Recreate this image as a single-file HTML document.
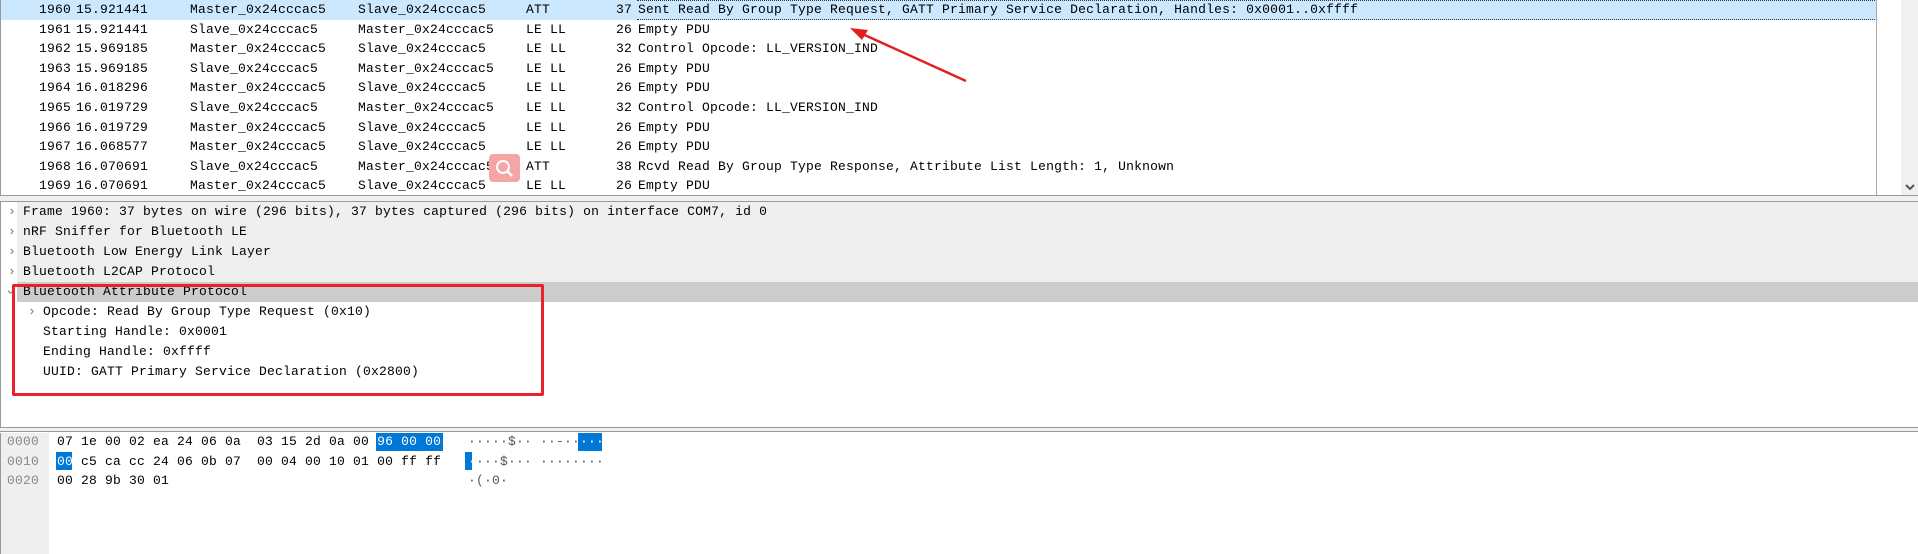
<!DOCTYPE html>
<html><head><meta charset="utf-8"><style>
*{margin:0;padding:0;box-sizing:border-box}
body{width:1918px;height:554px;background:#fff;position:relative;overflow:hidden;font-family:"Liberation Mono",monospace;font-size:13px;letter-spacing:0.2px;color:#000}
.a{position:absolute;white-space:pre}
.row{position:absolute;left:0;height:19.6px;line-height:19.6px;width:1876px}
.sel{background:#cce8ff;border:1px dotted #333;border-left:none}
.c{position:absolute;top:0;white-space:pre}
.r{text-align:right}
.d{position:absolute;left:0;height:20px;line-height:20px;width:1918px}
.chev{position:absolute;top:0;color:#777}
</style></head><body>
<!-- top packet list -->
<div style="position:absolute;left:0;top:0;width:1918px;height:196px;overflow:hidden;border-left:1px solid #999">
<div class="row" style="top:0"><div class="sel" style="position:absolute;left:636px;top:0;width:1240px;height:20px"></div><div style="position:absolute;left:0;top:0;width:636px;height:20px;background:#cce8ff"></div></div>
</div>
<div id="list"></div>
<div style="position:absolute;left:1876px;top:0;width:1px;height:196px;background:#aaa"></div>
<div style="position:absolute;left:1901px;top:0;width:17px;height:196px;background:#f0f0f0"></div>
<svg style="position:absolute;left:1905px;top:184px" width="10" height="8"><path d="M1 1 L5 5 L9 1" stroke="#555" stroke-width="2" fill="none"/></svg>
<div style="position:absolute;left:0;top:195px;width:1918px;height:1px;background:#999"></div>
<div style="position:absolute;left:0;top:196px;width:1918px;height:6px;background:#f0f0f0;border-bottom:1px solid #999"></div>
<!-- details -->
<div class="d" style="top:202px"><div style="position:absolute;left:17px;top:0;right:0;height:20px;background:#efefef"></div><span class="chev" style="left:8px">›</span><span class="c" style="left:23px">Frame 1960: 37 bytes on wire (296 bits), 37 bytes captured (296 bits) on interface COM7, id 0</span></div>
<div class="d" style="top:222px"><div style="position:absolute;left:17px;top:0;right:0;height:20px;background:#efefef"></div><span class="chev" style="left:8px">›</span><span class="c" style="left:23px">nRF Sniffer for Bluetooth LE</span></div>
<div class="d" style="top:242px"><div style="position:absolute;left:17px;top:0;right:0;height:20px;background:#efefef"></div><span class="chev" style="left:8px">›</span><span class="c" style="left:23px">Bluetooth Low Energy Link Layer</span></div>
<div class="d" style="top:262px"><div style="position:absolute;left:17px;top:0;right:0;height:20px;background:#efefef"></div><span class="chev" style="left:8px">›</span><span class="c" style="left:23px">Bluetooth L2CAP Protocol</span></div>
<div class="d" style="top:282px"><div style="position:absolute;left:17px;top:0;right:0;height:20px;background:#cccccc"></div><span class="chev" style="left:6px;transform:rotate(90deg)">›</span><span class="c" style="left:23px">Bluetooth Attribute Protocol</span></div>
<div class="d" style="top:302px"><span class="chev" style="left:28px">›</span><span class="c" style="left:43px">Opcode: Read By Group Type Request (0x10)</span></div>
<div class="d" style="top:322px"><span class="c" style="left:43px">Starting Handle: 0x0001</span></div>
<div class="d" style="top:342px"><span class="c" style="left:43px">Ending Handle: 0xffff</span></div>
<div class="d" style="top:362px"><span class="c" style="left:43px">UUID: GATT Primary Service Declaration (0x2800)</span></div>
<div style="position:absolute;left:12px;top:284px;width:532px;height:112px;border:3px solid #e8222c;border-radius:2px"></div>
<div style="position:absolute;left:0;top:202px;width:1px;height:226px;background:#999"></div>
<div style="position:absolute;left:0;top:427px;width:1918px;height:1px;background:#999"></div>
<div style="position:absolute;left:0;top:428px;width:1918px;height:4px;background:#f0f0f0;border-bottom:1px solid #999"></div>
<!-- bytes -->
<div style="position:absolute;left:0;top:433px;width:49px;height:121px;background:#efefef;border-left:1px solid #999"></div>
<div class="a" style="left:7px;top:432px;line-height:19.6px;color:#888">0000
0010
0020</div>
<div style="position:absolute;left:376px;top:433px;width:67px;height:18px;background:#0078d7"></div>
<div style="position:absolute;left:578px;top:433px;width:24px;height:18px;background:#0078d7"></div>
<div style="position:absolute;left:56px;top:452px;width:16px;height:18px;background:#0078d7"></div>
<div style="position:absolute;left:465px;top:452px;width:7px;height:18px;background:#0078d7"></div>
<div class="a" style="left:57px;top:432px;line-height:19.6px">07 1e 00 02 ea 24 06 0a  03 15 2d 0a 00 <span style="color:#fff">96 00 00</span>
<span style="color:#fff">00</span> c5 ca cc 24 06 0b 07  00 04 00 10 01 00 ff ff
00 28 9b 30 01</div>
<div class="a" style="left:468px;top:432px;line-height:19.6px;color:#555">·····$·· ··-··<span style="color:#fff">···</span>
<span style="color:#fff">·</span>···$··· ········
·(·0·</div>
<!-- magnifier -->
<div style="position:absolute;left:489px;top:154px;width:31px;height:28px;background:#f6a5a5;border-radius:4px"></div>
<svg style="position:absolute;left:489px;top:154px" width="31" height="28"><circle cx="14" cy="13" r="6" stroke="#fff" stroke-width="2" fill="none"/><path d="M18 17 L23 22" stroke="#fff" stroke-width="2.5"/></svg>
<!-- arrow -->
<svg style="position:absolute;left:0;top:0" width="1918" height="200"><path d="M966 81 L858 32" stroke="#e02020" stroke-width="2.5"/><path d="M850 28 L868 30 L862 40 Z" fill="#e02020"/></svg>
<script>
var d=[["1960","15.921441","Master_0x24cccac5","Slave_0x24cccac5","ATT","37","Sent Read By Group Type Request, GATT Primary Service Declaration, Handles: 0x0001..0xffff"],
["1961","15.921441","Slave_0x24cccac5","Master_0x24cccac5","LE LL","26","Empty PDU"],
["1962","15.969185","Master_0x24cccac5","Slave_0x24cccac5","LE LL","32","Control Opcode: LL_VERSION_IND"],
["1963","15.969185","Slave_0x24cccac5","Master_0x24cccac5","LE LL","26","Empty PDU"],
["1964","16.018296","Master_0x24cccac5","Slave_0x24cccac5","LE LL","26","Empty PDU"],
["1965","16.019729","Slave_0x24cccac5","Master_0x24cccac5","LE LL","32","Control Opcode: LL_VERSION_IND"],
["1966","16.019729","Master_0x24cccac5","Slave_0x24cccac5","LE LL","26","Empty PDU"],
["1967","16.068577","Master_0x24cccac5","Slave_0x24cccac5","LE LL","26","Empty PDU"],
["1968","16.070691","Slave_0x24cccac5","Master_0x24cccac5","ATT","38","Rcvd Read By Group Type Response, Attribute List Length: 1, Unknown"],
["1969","16.070691","Master_0x24cccac5","Slave_0x24cccac5","LE LL","26","Empty PDU"]];
var h='';d.forEach(function(r,i){var t=i*19.6;
h+='<div class="row" style="top:'+t+'px;height:'+(i==9?196-t:19.6)+'px;overflow:hidden">'+
'<span class="c r" style="right:'+(1876-71)+'px">'+r[0]+'</span>'+
'<span class="c" style="left:76px">'+r[1]+'</span>'+
'<span class="c" style="left:190px">'+r[2]+'</span>'+
'<span class="c" style="left:358px">'+r[3]+'</span>'+
'<span class="c" style="left:526px">'+r[4]+'</span>'+
'<span class="c r" style="right:'+(1876-632)+'px">'+r[5]+'</span>'+
'<span class="c" style="left:638px">'+r[6]+'</span></div>';});
document.getElementById('list').innerHTML=h;
</script>
</body></html>
